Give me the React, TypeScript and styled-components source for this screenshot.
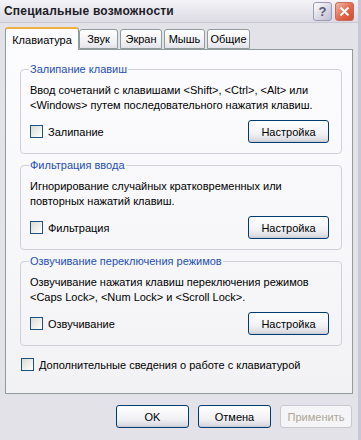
import React from "react"
import styled, { createGlobalStyle } from "styled-components"

const GlobalStyle = createGlobalStyle`
  html, body {
    margin: 0;
    padding: 0;
    background: #e3e2e8;
  }
  body {
    font-family: Tahoma, "Liberation Sans", Arial, sans-serif;
    font-size: 11px;
    color: #000;
  }
`

const Window = styled.div`
  width: 361px;
  height: 440px;
  box-sizing: border-box;
  background: #e3e2e8;
  border-right: 3px solid #c8c7d4;
  display: flex;
  flex-direction: column;
  overflow: hidden;
`

const TitleBar = styled.div`
  height: 22px;
  flex-shrink: 0;
  display: flex;
  align-items: center;
  padding: 0 4px 0 4px;
  background: linear-gradient(#f4f4f8, #e6e5ec 60%, #dcdbe4);
  border-bottom: 1px solid #c9c8d2;
`

const Title = styled.div`
  flex: 1;
  font-weight: bold;
  font-size: 12px;
  letter-spacing: 0.2px;
  color: #1d1d28;
`

const CaptionButton = styled.div<{ $close?: boolean }>`
  width: 19px;
  height: 19px;
  box-sizing: border-box;
  border-radius: 3px;
  margin-left: 3px;
  display: flex;
  align-items: center;
  justify-content: center;
  border: 1px solid ${(p) => (p.$close ? "#c66a5a" : "#9c9ab4")};
  background: ${(p) =>
    p.$close
      ? "linear-gradient(135deg, #f2b8a8, #e2664a 55%, #d04a30)"
      : "linear-gradient(135deg, #ffffff, #d6d5e2 60%, #c0bfd2)"};
  color: ${(p) => (p.$close ? "#fff" : "#5a5a78")};
  font-weight: bold;
  font-size: 13px;
`

const Body = styled.div`
  flex: 1;
  padding: 4px 5px 0 5px;
  display: flex;
  flex-direction: column;
`

const TabStrip = styled.div`
  display: flex;
  align-items: flex-end;
  height: 22px;
  position: relative;
  z-index: 1;
`

const Tab = styled.div<{ $active?: boolean; $w: number }>`
  box-sizing: border-box;
  width: ${(p) => p.$w}px;
  height: ${(p) => (p.$active ? 23 : 20)}px;
  margin-right: ${(p) => (p.$active ? 0 : 2)}px;
  margin-bottom: ${(p) => (p.$active ? -1 : 0)}px;
  display: flex;
  align-items: center;
  justify-content: center;
  white-space: nowrap;
  border: 1px solid #919b9c;
  border-bottom: ${(p) => (p.$active ? "none" : "1px solid #919b9c")};
  border-top: ${(p) => (p.$active ? "2px solid #f0b040" : "1px solid #919b9c")};
  border-radius: 3px 3px 0 0;
  background: ${(p) =>
    p.$active ? "#fcfcfe" : "linear-gradient(#ffffff, #f0f0f4 70%, #e2e2e8)"};
  color: #000;
`

const Panel = styled.div`
  box-sizing: border-box;
  height: 345px;
  border: 1px solid #919b9c;
  background: linear-gradient(#fcfcfe, #f6f6f8 70%, #f2f1f4);
  padding: 13px 10px 0 14px;
  display: flex;
  flex-direction: column;
  gap: 5px;
`

const Group = styled.fieldset`
  margin: 0;
  padding: 8px 12px 10px 9px;
  border: 1px solid #d0d0d8;
  border-radius: 4px;
  min-width: 0;
`

const Legend = styled.legend`
  color: #1e4fb4;
  padding: 0 1px;
  margin-left: -1px;
`

const Description = styled.p`
  margin: 0 0 7px 0;
  line-height: 15px;
`

const Row = styled.div`
  display: flex;
  align-items: center;
  justify-content: space-between;
  height: 23px;
`

const CheckLabel = styled.label`
  display: flex;
  align-items: center;
  gap: 5px;
`

const Box = styled.span`
  width: 13px;
  height: 13px;
  box-sizing: border-box;
  border: 1px solid #1c5180;
  background: linear-gradient(135deg, #dcdcd6, #f4f4f0 70%, #ffffff);
  display: inline-block;
`

const Button = styled.button<{ $disabled?: boolean }>`
  box-sizing: border-box;
  width: ${(p) => (p.$disabled ? 72 : 73)}px;
  height: 23px;
  padding: 0;
  font: inherit;
  border-radius: 3px;
  border: 1px solid ${(p) => (p.$disabled ? "#c9c7d0" : "#003c74")};
  background: ${(p) =>
    p.$disabled
      ? "#f5f4f6"
      : "linear-gradient(#ffffff, #f2f2f6 60%, #dcdce4 90%, #c8c8d2)"};
  color: ${(p) => (p.$disabled ? "#aca899" : "#000")};
`

const WideButton = styled(Button)`
  width: 81px;
`

const Footer = styled.div`
  display: flex;
  justify-content: flex-end;
  gap: 9px;
  padding-top: 11px;
  padding-right: 1px;
`

const BottomCheck = styled.div`
  margin-top: 7px;
  padding-left: 1px;
`

const Check = ({ label }: { label: string }) => (
  <CheckLabel>
    <Box />
    <span>{label}</span>
  </CheckLabel>
)

const tabs = [
  { label: "Клавиатура", w: 74 },
  { label: "Звук", w: 39 },
  { label: "Экран", w: 42 },
  { label: "Мышь", w: 41 },
  { label: "Общие", w: 43 },
]

const groups = [
  {
    title: "Залипание клавиш",
    text: (
      <>
        Ввод сочетаний с клавишами &lt;Shift&gt;, &lt;Ctrl&gt;, &lt;Alt&gt; или
        <br />
        &lt;Windows&gt; путем последовательного нажатия клавиш.
      </>
    ),
    check: "Залипание",
  },
  {
    title: "Фильтрация ввода",
    text: (
      <>
        Игнорирование случайных кратковременных или
        <br />
        повторных нажатий клавиш.
      </>
    ),
    check: "Фильтрация",
  },
  {
    title: "Озвучивание переключения режимов",
    text: (
      <>
        Озвучивание нажатия клавиш переключения режимов
        <br />
        &lt;Caps Lock&gt;, &lt;Num Lock&gt; и &lt;Scroll Lock&gt;.
      </>
    ),
    check: "Озвучивание",
  },
]

export default function App() {
  return (
    <>
      <GlobalStyle />
      <Window>
        <TitleBar>
          <Title>Специальные возможности</Title>
          <CaptionButton>?</CaptionButton>
          <CaptionButton $close>
            <svg width="11" height="11" viewBox="0 0 11 11">
              <path d="M1.5 1.5 L9.5 9.5 M9.5 1.5 L1.5 9.5" stroke="#fff" strokeWidth="2" />
            </svg>
          </CaptionButton>
        </TitleBar>
        <Body>
          <TabStrip>
            {tabs.map((t, i) => (
              <Tab key={t.label} $active={i === 0} $w={t.w}>
                {t.label}
              </Tab>
            ))}
          </TabStrip>
          <Panel>
            {groups.map((g) => (
              <Group key={g.title}>
                <Legend>{g.title}</Legend>
                <Description>{g.text}</Description>
                <Row>
                  <Check label={g.check} />
                  <WideButton>Настройка</WideButton>
                </Row>
              </Group>
            ))}
            <BottomCheck>
              <Check label="Дополнительные сведения о работе с клавиатурой" />
            </BottomCheck>
          </Panel>
          <Footer>
            <Button>OK</Button>
            <Button>Отмена</Button>
            <Button $disabled>Применить</Button>
          </Footer>
        </Body>
      </Window>
    </>
  )
}
